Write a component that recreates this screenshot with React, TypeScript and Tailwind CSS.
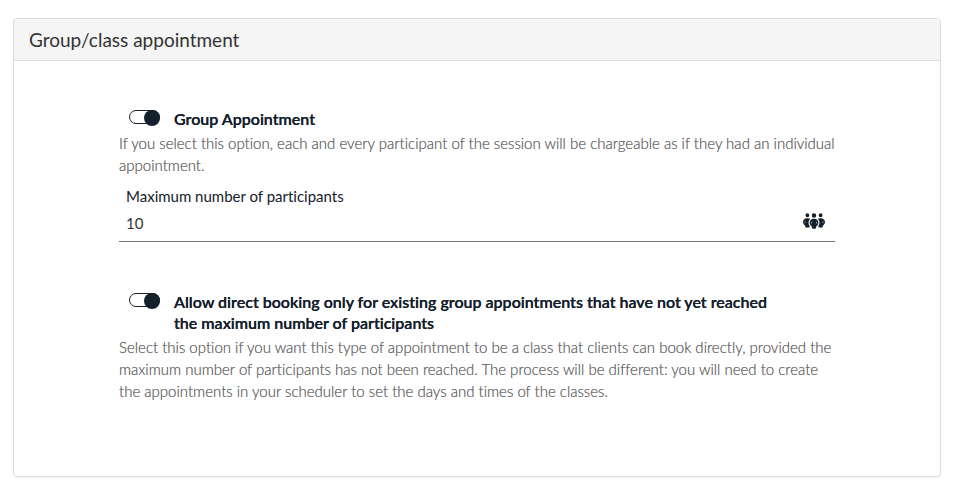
import { useState } from "react";
import { FaPeopleGroup } from "react-icons/fa6";

type ToggleProps = {
  id: string;
  label: string;
  checked: boolean;
  onChange: (checked: boolean) => void;
};

function Toggle({ id, label, checked, onChange }: ToggleProps) {
  return (
    <div className="flex items-start gap-3.5 pl-2.5">
      <input
        id={id}
        type="checkbox"
        role="switch"
        checked={checked}
        onChange={(e) => onChange(e.target.checked)}
        className="relative mt-0.5 h-3.5 w-[31px] shrink-0 cursor-pointer appearance-none rounded-full border border-[#14212d] before:absolute before:-top-px before:-left-px before:size-4 before:rounded-full before:bg-[#14212d] checked:before:left-3.5"
      />
      <label
        htmlFor={id}
        className="max-w-[600px] cursor-pointer text-base leading-[21px] font-semibold text-[#14212d] [text-shadow:0_0_0_#14212d]"
      >
        {label}
      </label>
    </div>
  );
}

export default function App() {
  const [isGroup, setIsGroup] = useState(true);
  const [directBooking, setDirectBooking] = useState(true);
  const [max, setMax] = useState("10");

  return (
    <main className="bg-white pt-[18px] pr-[17px] pb-6 pl-[13px] font-['Lato',sans-serif] text-[15px] leading-[22px] [font-variant-ligatures:none]">
      <section className="rounded border border-[#dddddd] bg-white shadow-xs">
        <header className="rounded-t border-b border-[#dddddd] bg-[#f5f5f5] px-[15px] py-2.5">
          <h1 className="text-[19px] leading-[21px] text-[#333333]">Group/class appointment</h1>
        </header>

        <div className="px-[105px] pt-[47px] pb-[74px]">
          <Toggle
            id="group"
            label="Group Appointment"
            checked={isGroup}
            onChange={setIsGroup}
          />
          <p className="mt-[3px] font-light text-[#707070] [text-shadow:0_0_0_#707070]">
            If you select this option, each and every participant of the session will be chargeable
            as if they had an individual appointment.
          </p>

          {/* Participants limit */}
          <div className="mt-[9px] border-b border-[#757575] px-[7px] pb-[7px]">
            <label htmlFor="max" className="block text-[#14212d]">
              Maximum number of participants
            </label>
            <div className="mt-[5px] flex items-start justify-between pr-[3px]">
              <input
                id="max"
                type="text"
                inputMode="numeric"
                value={max}
                onChange={(e) => setMax(e.target.value)}
                className="min-w-0 flex-1 text-[#333333] outline-none"
              />
              <FaPeopleGroup className="h-[18px] w-[22px] text-[#14212d]" />
            </div>
          </div>

          <div className="mt-[49px]">
            <Toggle
              id="direct"
              label="Allow direct booking only for existing group appointments that have not yet reached the maximum number of participants"
              checked={directBooking}
              onChange={setDirectBooking}
            />
            <p className="mt-[3px] font-light text-[#707070] [text-shadow:0_0_0_#707070]">
              Select this option if you want this type of appointment to be a class that clients can
              book directly, provided the maximum number of participants has not been reached. The
              process will be different: you will need to create the appointments in your scheduler
              to set the days and times of the classes.
            </p>
          </div>
        </div>
      </section>
    </main>
  );
}
